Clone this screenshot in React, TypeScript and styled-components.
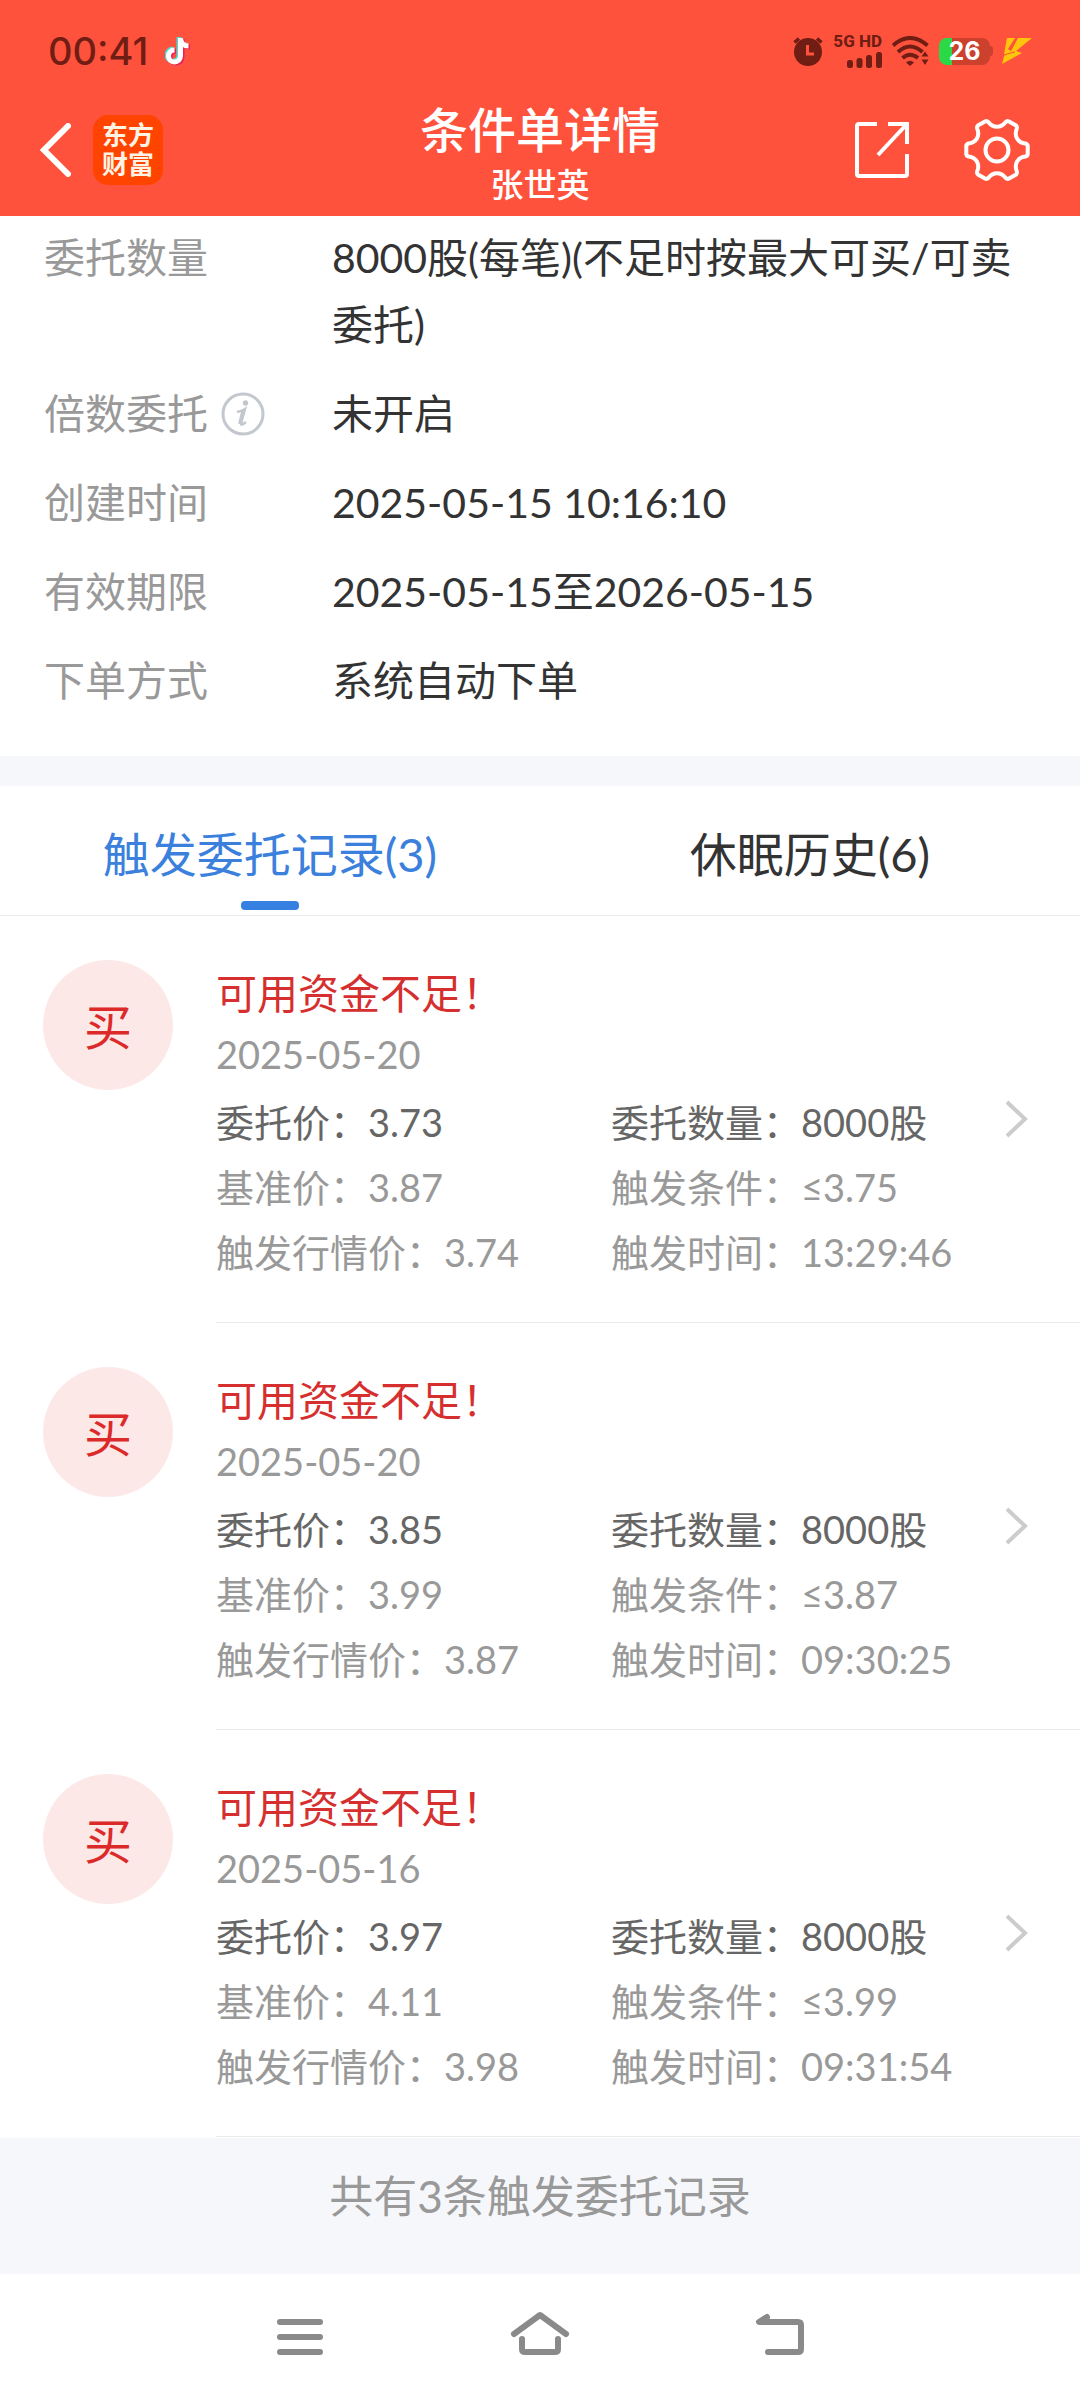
import React, { useState } from "react";
import styled, { createGlobalStyle } from "styled-components";

const GlobalStyle = createGlobalStyle`
  * { box-sizing: border-box; }
  body {
    margin: 0;
    background: #ffffff;
    font-family: Lato, "Noto Sans CJK SC", sans-serif;
    color: #333333;
  }
  button {
    padding: 0;
    border: 0;
    background: none;
    font: inherit;
    color: inherit;
    cursor: pointer;
  }
  h1, p, dl, dt, dd, ul { margin: 0; padding: 0; }
  svg { display: block; }
`;

const Screen = styled.div`
  display: flex;
  flex-direction: column;
  min-height: 100vh;
`;

/* ---------- header ---------- */

const Header = styled.header`
  background: #ff523d;
  color: #ffffff;
`;

const StatusBar = styled.div`
  display: flex;
  align-items: center;
  justify-content: space-between;
  height: 84px;
  padding: 18px 48px 0 48px;
  color: #701d14;
`;

const StatusGroup = styled.div<{ $gap: number }>`
  display: flex;
  align-items: center;
  gap: ${(p) => p.$gap}px;
`;

const Clock = styled.time`
  font-family: Inter, sans-serif;
  font-size: 38px;
  font-weight: 500;
  line-height: 44px;
`;

const Network = styled.div`
  display: flex;
  flex-direction: column;
  align-items: flex-end;
  gap: 4px;
  font-family: Roboto, sans-serif;
  font-size: 17px;
  font-weight: 800;
  line-height: 14px;
`;

const Battery = styled.div`
  display: flex;
  align-items: center;
  justify-content: center;
  width: 51px;
  height: 27px;
  border-radius: 8px;
  background: linear-gradient(to right, #2bd946 13px, #cc402e 13px);
  color: #ffffff;
  font-family: Inter, sans-serif;
  font-size: 25px;
  font-weight: 700;
  line-height: 27px;
`;

const AppBar = styled.div`
  display: grid;
  grid-template-columns: 1fr auto 1fr;
  align-items: center;
  height: 132px;
  padding: 0 40px;
`;

const BarActions = styled.div<{ $end?: boolean }>`
  display: flex;
  align-items: center;
  justify-content: ${(p) => (p.$end ? "flex-end" : "flex-start")};
  gap: ${(p) => (p.$end ? 54 : 22)}px;
  padding-right: ${(p) => (p.$end ? 10 : 0)}px;
`;

const Logo = styled.span`
  display: flex;
  align-items: center;
  justify-content: center;
  width: 70px;
  height: 70px;
  border-radius: 15px;
  background: #ff4400;
  color: #fff3e4;
  font-size: 26px;
  font-weight: 700;
  line-height: 29px;
`;

const Heading = styled.div`
  text-align: center;
`;

const Title = styled.h1`
  font-size: 48px;
  font-weight: 500;
  line-height: 70px;
`;

const Account = styled.p`
  font-size: 33px;
  font-weight: 500;
  line-height: 38px;
  padding-bottom: 2px;
`;

/* ---------- order details ---------- */

const Details = styled.dl`
  display: grid;
  grid-template-columns: 288px 1fr;
  row-gap: 22px;
  padding: 8px 44px 42px;
  font-size: 41px;
  line-height: 67px;
`;

const Term = styled.dt`
  display: flex;
  align-items: center;
  gap: 13px;
  height: 67px;
  color: #999999;
`;

/* ---------- tabs ---------- */

const Tabs = styled.div`
  display: grid;
  grid-template-columns: 1fr 1fr;
  height: 160px;
  border-top: 30px solid #f6f7fa;
  border-bottom: 1px solid #ebebeb;
`;

const Tab = styled.button<{ $active: boolean }>`
  display: flex;
  flex-direction: column;
  align-items: center;
  justify-content: flex-end;
  gap: 14px;
  padding-bottom: 5px;
  font-size: 47px;
  line-height: 66px;
  color: ${(p) => (p.$active ? "#3a80dc" : "#333333")};
  &::after {
    content: "";
    width: 58px;
    height: 9px;
    border-radius: 4px;
    background: ${(p) => (p.$active ? "#3680e2" : "transparent")};
  }
`;

/* ---------- records ---------- */

const Records = styled.ul`
  padding-bottom: 1px;
  list-style: none;
`;

const Record = styled.li`
  display: grid;
  grid-template-columns: 130px 1fr;
  column-gap: 43px;
  height: 407px;
  padding-left: 43px;
`;

const Side = styled.span`
  display: flex;
  align-items: center;
  justify-content: center;
  width: 130px;
  height: 130px;
  margin-top: 44px;
  padding-top: 4px;
  border-radius: 50%;
  background: #fde8e8;
  color: #dc2a2a;
  font-size: 48px;
  line-height: 58px;
`;

const RecordBody = styled.div`
  display: grid;
  grid-template-columns: 1fr 75px;
  align-content: start;
  padding-top: 46px;
  border-bottom: 1px solid #ebebeb;
`;

const Reason = styled.p`
  grid-column: 1 / -1;
  font-size: 41px;
  line-height: 64px;
  color: #d62f2f;
`;

const RecordDate = styled.time`
  grid-column: 1 / -1;
  margin-bottom: 8px;
  font-size: 38px;
  line-height: 56px;
  color: #999999;
`;

const Facts = styled.dl`
  display: grid;
  grid-template-columns: 395px 1fr;
  font-size: 38px;
  line-height: 65px;
  white-space: nowrap;
`;

const Fact = styled.div<{ $strong?: boolean }>`
  display: flex;
  color: ${(p) => (p.$strong ? "#666666" : "#999999")};
`;

const OpenRecord = styled.button`
  display: flex;
  align-items: center;
  height: 58px;
`;

const Summary = styled.p`
  height: 136px;
  padding-top: 26px;
  background: #f6f7fa;
  font-size: 44px;
  line-height: 64px;
  text-align: center;
  color: #999999;
`;

const NavBar = styled.nav`
  display: flex;
  flex: 1;
  align-items: center;
  justify-content: center;
  gap: 180px;
  min-height: 126px;
  padding-bottom: 4px;
`;

/* ---------- drawings ---------- */

const MusicNote = () => (
  <svg width="26" height="30" viewBox="0 0 26 30" fill="none" strokeWidth="5">
    <path d="M14 1v18a6 6 0 1 1-6-6M14 2c1 5 4 7 8 7" stroke="#4fd8d6" />
    <path d="M17 3v18a6 6 0 1 1-6-6M17 4c1 5 4 7 8 7" stroke="#e8205a" />
    <path d="M15.500 2v18a6 6 0 1 1-6-6M15.500 3c1 5 4 7 8 7" stroke="#ffffff" />
  </svg>
);

const Alarm = () => (
  <svg width="30" height="30" viewBox="0 0 30 30" fill="none">
    <circle cx="15" cy="16" r="14" fill="#701d14" />
    <path d="M1.500 6.500 6 2.500M28.500 6.500 24 2.500" stroke="#701d14" strokeWidth="3.500" />
    <path d="M14.500 9v9H21" stroke="#ff523d" strokeWidth="3" />
  </svg>
);

const Signal = () => (
  <svg width="35" height="16" viewBox="0 0 35 16" fill="#701d14">
    <rect x="0" y="8" width="6" height="8" rx="2.500" />
    <rect x="9.500" y="6" width="6" height="10" rx="2.500" />
    <rect x="19" y="3" width="6" height="13" rx="2.500" />
    <rect x="29" y="0" width="6" height="16" rx="2.500" />
  </svg>
);

const Wifi = () => (
  <svg width="37" height="30" viewBox="0 0 37 30" fill="none" stroke="#701d14" strokeWidth="4">
    <path d="M1 9.500Q18 -5.500 35.500 9.500" />
    <path d="M6 16Q18 5 30.500 16" />
    <path d="M10.500 22Q18 15.500 26 22" />
    <path d="M14 26.500Q18 23 22 26.500L18 30Z" fill="#701d14" stroke="none" />
    <path d="M29.500 20.500h7L33 15.500ZM29.500 23.500h7L33 29Z" fill="#701d14" stroke="none" />
  </svg>
);

const BatteryTip = styled.span`
  width: 3px;
  height: 10px;
  margin-right: 9px;
  border-radius: 0 3px 3px 0;
  background: #cc402e;
`;

const Bolt = () => (
  <svg width="30" height="26" viewBox="0 0 30 26" fill="#ffc40c">
    <path d="M5 0H13L6 11L10 14L2 16Z" />
    <path d="M16 0H30L14 13L20 15L0 26L3 15L9 13Z" />
    <path d="M2 17L10 14.500L13 14" stroke="#ff523d" strokeWidth="1" />
  </svg>
);

const BackChevron = () => (
  <svg width="31" height="54" viewBox="0 0 31 54" fill="none" stroke="#ffffff" strokeWidth="6">
    <path d="M28 3 4 27l24 24" strokeLinecap="round" />
  </svg>
);

const Share = () => (
  <svg width="56" height="58" viewBox="0 0 56 58" fill="none" stroke="#ffffff" strokeWidth="4">
    <path d="M23 3H5Q3 3 3 5V53Q3 55 5 55H51Q53 55 53 53V33" />
    <path d="M34 3H53V23M52 4 24 34" />
  </svg>
);

/* Six rounded lobes at 60-degree steps, joined by concave curves. */
const gearOutline = (() => {
  const at = (radius: number, degrees: number) => {
    const a = (degrees * Math.PI) / 180;
    return `${(33 + radius * Math.cos(a)).toFixed(2)} ${(33 + radius * Math.sin(a)).toFixed(2)}`;
  };
  let d = `M${at(29, -13)}`;
  for (let k = 0; k < 360; k += 60) {
    d += `Q${at(31, k - 11)} ${at(31, k - 8)}L${at(31, k + 8)}Q${at(31, k + 11)} ${at(29, k + 13)}`;
    d += `C${at(22, k + 20)} ${at(22, k + 40)} ${at(29, k + 47)}`;
  }
  return `${d}Z`;
})();

const Gear = () => (
  <svg width="66" height="66" viewBox="0 0 66 66" fill="none" stroke="#ffffff" strokeWidth="4">
    <path d={gearOutline} strokeLinejoin="round" />
    <circle cx="33" cy="33" r="11.500" />
  </svg>
);

const Info = () => (
  <svg width="44" height="44" viewBox="0 0 44 44" fill="none" stroke="#c3c7ce">
    <circle cx="22" cy="22" r="20" strokeWidth="3" />
    <circle cx="24.500" cy="11" r="2.700" fill="#c3c7ce" stroke="none" />
    <path d="M16 20Q21 19 24 17L20 31Q19.500 34.500 25 30" strokeWidth="2.500" />
    <path d="M22.500 18 19 32" strokeWidth="4" />
  </svg>
);

const OpenChevron = () => (
  <svg width="24" height="38" viewBox="0 0 24 38" fill="none" stroke="#cccccc" strokeWidth="4">
    <path d="M2 2 20 19 2 36" />
  </svg>
);

const navStroke = {
  width: 60,
  height: 48,
  viewBox: "0 0 60 48",
  fill: "none",
  stroke: "#8a8a8a",
  strokeWidth: 6,
  strokeLinecap: "round" as const,
  strokeLinejoin: "round" as const,
};

const MenuIcon = () => (
  <svg {...navStroke}>
    <path d="M10 11H50M10 26H50M10 41H50" />
  </svg>
);

const HomeIcon = () => (
  <svg {...navStroke}>
    <path d="M4 23 30 4 56 23" />
    <path d="M12 28V38Q12 41 15 41H45Q48 41 48 38V28" />
  </svg>
);

const ReturnIcon = () => (
  <svg {...navStroke}>
    <path d="M17 6 9 11H48Q51 11 51 14V38Q51 41 48 41H18" />
  </svg>
);

/* ---------- data ---------- */

const details = [
  { term: "委托数量", value: "8000股(每笔)(不足时按最大可买/可卖委托)" },
  { term: "倍数委托", value: "未开启", info: true },
  { term: "创建时间", value: "2025-05-15 10:16:10" },
  { term: "有效期限", value: "2025-05-15至2026-05-15" },
  { term: "下单方式", value: "系统自动下单" },
];

const records = [
  { date: "2025-05-20", price: "3.73", base: "3.87", market: "3.74", rule: "≤3.75", time: "13:29:46" },
  { date: "2025-05-20", price: "3.85", base: "3.99", market: "3.87", rule: "≤3.87", time: "09:30:25" },
  { date: "2025-05-16", price: "3.97", base: "4.11", market: "3.98", rule: "≤3.99", time: "09:31:54" },
];

const tabs = ["触发委托记录(3)", "休眠历史(6)"];

export default function App() {
  const [active, setActive] = useState(0);

  return (
    <Screen lang="zh-CN">
      <GlobalStyle />
      <Header>
        <StatusBar>
          <StatusGroup $gap={17}>
            <Clock>00:41</Clock>
            <MusicNote />
          </StatusGroup>
          <StatusGroup $gap={10}>
            <Alarm />
            <Network>
              <span>5G HD</span>
              <Signal />
            </Network>
            <Wifi />
            <StatusGroup $gap={0}>
              <Battery>26</Battery>
              <BatteryTip />
              <Bolt />
            </StatusGroup>
          </StatusGroup>
        </StatusBar>
        <AppBar>
          <BarActions>
            <button aria-label="返回">
              <BackChevron />
            </button>
            <Logo>
              东方
              <br />
              财富
            </Logo>
          </BarActions>
          <Heading>
            <Title>条件单详情</Title>
            <Account>张世英</Account>
          </Heading>
          <BarActions $end>
            <button aria-label="分享">
              <Share />
            </button>
            <button aria-label="设置">
              <Gear />
            </button>
          </BarActions>
        </AppBar>
      </Header>

      <main>
        <Details>
          {details.map((row) => (
            <React.Fragment key={row.term}>
              <Term>
                {row.term}
                {row.info && (
                  <button aria-label="说明">
                    <Info />
                  </button>
                )}
              </Term>
              <dd>{row.value}</dd>
            </React.Fragment>
          ))}
        </Details>

        <Tabs role="tablist">
          {tabs.map((label, i) => (
            <Tab key={label} role="tab" aria-selected={active === i} $active={active === i} onClick={() => setActive(i)}>
              {label}
            </Tab>
          ))}
        </Tabs>

        <Records>
          {records.map((r) => (
            <Record key={r.date + r.time}>
              <Side>买</Side>
              <RecordBody>
                <Reason>可用资金不足！</Reason>
                <RecordDate>{r.date}</RecordDate>
                <Facts>
                  <Fact $strong>
                    <dt>委托价：</dt>
                    <dd>{r.price}</dd>
                  </Fact>
                  <Fact $strong>
                    <dt>委托数量：</dt>
                    <dd>8000股</dd>
                  </Fact>
                  <Fact>
                    <dt>基准价：</dt>
                    <dd>{r.base}</dd>
                  </Fact>
                  <Fact>
                    <dt>触发条件：</dt>
                    <dd>{r.rule}</dd>
                  </Fact>
                  <Fact>
                    <dt>触发行情价：</dt>
                    <dd>{r.market}</dd>
                  </Fact>
                  <Fact>
                    <dt>触发时间：</dt>
                    <dd>{r.time}</dd>
                  </Fact>
                </Facts>
                <OpenRecord aria-label="查看记录">
                  <OpenChevron />
                </OpenRecord>
              </RecordBody>
            </Record>
          ))}
        </Records>
        <Summary>共有3条触发委托记录</Summary>
      </main>

      <NavBar>
        <button aria-label="菜单">
          <MenuIcon />
        </button>
        <button aria-label="主页">
          <HomeIcon />
        </button>
        <button aria-label="后退">
          <ReturnIcon />
        </button>
      </NavBar>
    </Screen>
  );
}
